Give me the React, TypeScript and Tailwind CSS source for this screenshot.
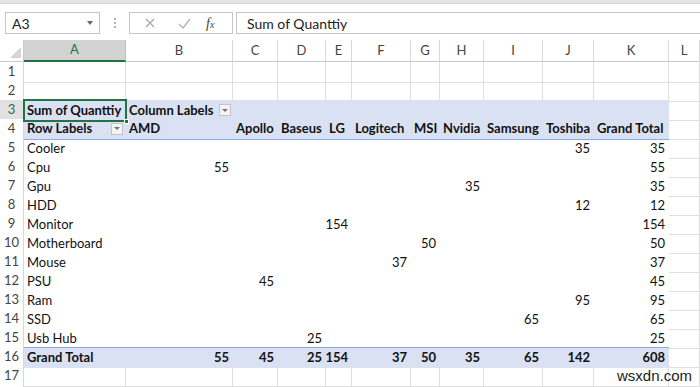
import React from "react";

const GRID =
  "grid grid-cols-[24px_102px_107px_45px_48px_26px_59px_29px_44px_59px_51px_75px_31px]";

const letters = ["A", "B", "C", "D", "E", "F", "G", "H", "I", "J", "K", "L"];
const brands = ["AMD", "Apollo", "Baseus", "LG", "Logitech", "MSI", "Nvidia", "Samsung", "Toshiba", "Grand Total"];

type V = (number | null)[];
const e = null;
const data: [string, V][] = [
  ["Cooler", [e, e, e, e, e, e, e, e, 35, 35]],
  ["Cpu", [55, e, e, e, e, e, e, e, e, 55]],
  ["Gpu", [e, e, e, e, e, e, 35, e, e, 35]],
  ["HDD", [e, e, e, e, e, e, e, e, 12, 12]],
  ["Monitor", [e, e, e, 154, e, e, e, e, e, 154]],
  ["Motherboard", [e, e, e, e, e, 50, e, e, e, 50]],
  ["Mouse", [e, e, e, e, 37, e, e, e, e, 37]],
  ["PSU", [e, 45, e, e, e, e, e, e, e, 45]],
  ["Ram", [e, e, e, e, e, e, e, e, 95, 95]],
  ["SSD", [e, e, e, e, e, e, e, 65, e, 65]],
  ["Usb Hub", [e, e, 25, e, e, e, e, e, e, 25]],
];
const totals = [55, 45, 25, 154, 37, 50, 35, 65, 142, 608];

function RowHead({ n, sel }: { n?: number; sel?: boolean }) {
  return (
    <div
      className={
        sel
          ? "flex items-center justify-center border-r border-b border-[#c8c8c8] bg-[#e1e1e1] text-[#217346] text-[13px]"
          : "flex items-center justify-center border-r border-b border-[#d8d8d8] bg-white text-[#444] text-[13px]"
      }
    >
      {n ?? ""}
    </div>
  );
}

function Empty() {
  return <div className="border-r border-b border-[#dedede]" />;
}

function DropBtn() {
  return (
    <div className="w-[12px] h-[12px] border border-[#c4c4c4] bg-[#f4f4f4] flex items-center justify-center">
      <div className="w-0 h-0 border-l-[3px] border-r-[3px] border-t-[3px] border-l-transparent border-r-transparent border-t-[#777]" />
    </div>
  );
}

export default function App() {
  return (
    <div className="relative w-[700px] h-[387px] overflow-hidden bg-white font-['Lato',sans-serif] text-[13px] text-[#111]">
      {/* top strip */}
      <div className="h-[4px] bg-[#e4e4e4] border-b border-[#d6d6d6]" />
      {/* formula bar */}
      <div className="h-[36px] flex items-start pt-[8px]">
        <div className="ml-[5px] w-[95px] h-[22px] border border-[#c6c6c6] flex items-center pl-[6px] pr-[6px] justify-between">
          <span className="text-[14px] text-[#222]">A3</span>
          <div className="w-0 h-0 border-l-[3px] border-r-[3px] border-t-[4px] border-l-transparent border-r-transparent border-t-[#666]" />
        </div>
        <div className="w-[29px] h-[22px] flex flex-col items-center justify-center gap-[2px]">
          <div className="w-[2px] h-[2px] bg-[#b0b0b0]" />
          <div className="w-[2px] h-[2px] bg-[#b0b0b0]" />
          <div className="w-[2px] h-[2px] bg-[#b0b0b0]" />
        </div>
        <div className="w-[104px] h-[22px] border border-[#c6c6c6] flex items-center">
          <svg width="34" height="20" viewBox="0 0 34 20" className="ml-[2px]">
            <path d="M14 6 L22 14 M22 6 L14 14" stroke="#a6a6a6" strokeWidth="1.2" fill="none" />
          </svg>
          <svg width="34" height="20" viewBox="0 0 34 20">
            <path d="M13 11 L17 15 L24 6" stroke="#b4b4b4" strokeWidth="1.3" fill="none" />
          </svg>
          <span className="ml-[6px] font-['Liberation_Serif',serif] italic text-[14px] text-[#444]">
            f<span className="text-[10px]">x</span>
          </span>
        </div>
        <div className="ml-[3px] flex-1 h-[22px] border border-r-0 border-[#c6c6c6] flex items-center pl-[10px]">
          <span className="text-[14px] text-[#222]">Sum of Quanttiy</span>
        </div>
      </div>

      {/* column header */}
      <div className={GRID + " h-[22px]"}>
        <div className="relative border-r border-b border-[#c8c8c8] bg-white">
          <svg className="absolute right-[2px] bottom-[3px]" width="11" height="11" viewBox="0 0 11 11">
            <path d="M11 0 L11 11 L0 11 Z" fill="#d4d4d4" />
          </svg>
        </div>
        {letters.map((l) =>
          l === "A" ? (
            <div
              key={l}
              className="flex items-center justify-center bg-[#d3d3d3] border-r border-[#bdbdbd] border-b-2 border-b-[#217346] text-[#217346] text-[13px]"
            >
              {l}
            </div>
          ) : (
            <div
              key={l}
              className="flex items-center justify-center bg-white border-r border-b border-r-[#d8d8d8] border-b-[#c8c8c8] text-[#444] text-[13px]"
            >
              {l}
            </div>
          )
        )}
      </div>

      {/* rows 1-2 */}
      {[1, 2].map((r) => (
        <div key={r} className={GRID + " h-[19px]"}>
          <RowHead n={r} />
          {letters.map((l) => (
            <Empty key={l} />
          ))}
        </div>
      ))}

      {/* row 3 */}
      <div className={GRID + " h-[19px]"}>
        <RowHead n={3} sel />
        <div className="relative bg-[#d9e1f2] flex items-center pl-[3px] font-bold whitespace-nowrap">
          Sum of Quanttiy
          <div className="absolute inset-[-1px] border-2 border-[#217346]" />
          <div className="absolute right-[-3px] bottom-[-3px] w-[5px] h-[5px] bg-[#217346] border border-white" />
        </div>
        <div className="bg-[#d9e1f2] flex items-center justify-between pl-[3px] pr-[2px] font-bold whitespace-nowrap">
          <span>Column Labels</span>
          <DropBtn />
        </div>
        <div className="col-span-9 bg-[#d9e1f2]" />
        <Empty />
      </div>

      {/* row 4 */}
      <div className={GRID + " h-[19px]"}>
        <RowHead n={4} />
        <div className="bg-[#d9e1f2] border-b border-[#8ea9db] flex items-center justify-between pl-[3px] pr-[3px] font-bold whitespace-nowrap">
          <span>Row Labels</span>
          <DropBtn />
        </div>
        {brands.map((b) => (
          <div
            key={b}
            className="bg-[#d9e1f2] border-b border-[#8ea9db] flex items-center pl-[3px] font-bold whitespace-nowrap overflow-visible"
          >
            {b}
          </div>
        ))}
        <Empty />
      </div>

      {/* data rows */}
      {data.map(([label, vals], i) => (
        <div key={label} className={GRID + " h-[19px]"}>
          <RowHead n={i + 5} />
          <div className="flex items-center pl-[3px] whitespace-nowrap">{label}</div>
          {vals.map((v, j) => (
            <div key={j} className="flex items-center justify-end pr-[4px]">
              {v ?? ""}
            </div>
          ))}
          <Empty />
        </div>
      ))}

      {/* grand total */}
      <div className={GRID + " h-[19px]"}>
        <RowHead n={16} />
        <div className="bg-[#d9e1f2] border-t border-[#8ea9db] flex items-center pl-[3px] font-bold whitespace-nowrap">
          Grand Total
        </div>
        {totals.map((v, j) => (
          <div
            key={j}
            className="bg-[#d9e1f2] border-t border-[#8ea9db] flex items-center justify-end pr-[4px] font-bold"
          >
            {v}
          </div>
        ))}
        <Empty />
      </div>

      {/* row 17 and the edge of row 18 */}
      <div className={GRID + " h-[19px]"}>
        <RowHead n={17} />
        {letters.map((l) => (
          <Empty key={l} />
        ))}
      </div>
      <div className={GRID + " h-[19px]"}>
        <RowHead />
        {letters.map((l) => (
          <Empty key={l} />
        ))}
      </div>

      {/* watermark */}
      <div className="absolute left-[617px] top-[365px] font-['Liberation_Sans',sans-serif] text-[15px] text-[#222]">
        wsxdn.com
      </div>
    </div>
  );
}
